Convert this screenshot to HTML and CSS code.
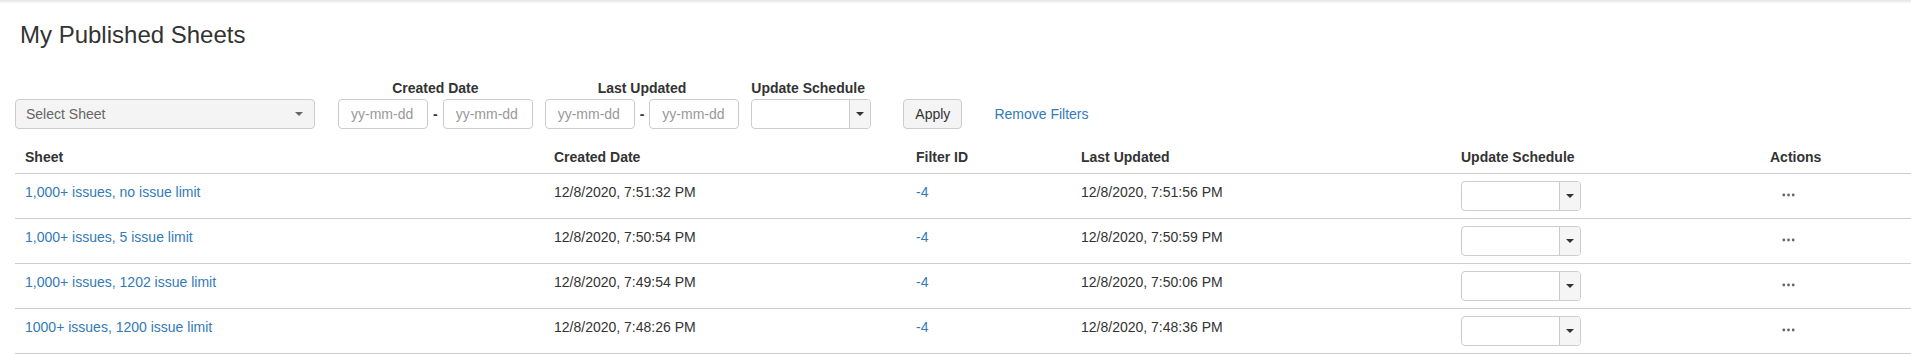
FILE: index.html
```html
<!DOCTYPE html>
<html lang="en">
<head>
    <meta charset="UTF-8">
    <meta name="viewport" content="width=device-width, initial-scale=1.0">
    <title>My Published Sheets</title>
    <link rel="stylesheet" href="styles.css">
</head>
<body>
    <div class="top-shadow"></div>

    <!-- Page content -->
    <div class="page">
        <h3 class="page-title">My Published Sheets</h3>

        <!-- Filters -->
        <div class="filters">
            <div class="filter-group">
                <div class="picker">
                    <span class="picker-text">Select Sheet</span>
                    <span class="caret caret-muted"></span>
                </div>
            </div>

            <div class="filter-group filter-range first-range">
                <label class="filter-label">Created Date</label>
                <div class="range">
                    <input class="date-input" type="text" placeholder="yy-mm-dd">
                    <span class="range-dash">-</span>
                    <input class="date-input" type="text" placeholder="yy-mm-dd">
                </div>
            </div>

            <div class="filter-group filter-range">
                <label class="filter-label">Last Updated</label>
                <div class="range">
                    <input class="date-input" type="text" placeholder="yy-mm-dd">
                    <span class="range-dash">-</span>
                    <input class="date-input" type="text" placeholder="yy-mm-dd">
                </div>
            </div>

            <div class="filter-group filter-schedule">
                <label class="filter-label">Update Schedule</label>
                <div class="combo">
                    <span class="combo-field"></span>
                    <span class="combo-btn"><span class="caret"></span></span>
                </div>
            </div>

            <button class="btn" type="button">Apply</button>
            <a class="link remove-link" href="#">Remove Filters</a>
        </div>

        <!-- Sheets table -->
        <table class="sheets">
            <colgroup>
                <col class="col-sheet">
                <col class="col-created">
                <col class="col-filter">
                <col class="col-updated">
                <col class="col-schedule">
                <col class="col-actions">
            </colgroup>
            <thead>
                <tr>
                    <th>Sheet</th>
                    <th>Created Date</th>
                    <th>Filter ID</th>
                    <th>Last Updated</th>
                    <th>Update Schedule</th>
                    <th>Actions</th>
                </tr>
            </thead>
            <tbody>
                <tr>
                    <td><a class="link" href="#">1,000+ issues, no issue limit</a></td>
                    <td>12/8/2020, 7:51:32 PM</td>
                    <td><a class="link" href="#">-4</a></td>
                    <td>12/8/2020, 7:51:56 PM</td>
                    <td><div class="combo"><span class="combo-field"></span><span class="combo-btn"><span class="caret"></span></span></div></td>
                    <td><span class="actions"><svg width="13" height="4" viewBox="0 0 13 4" aria-hidden="true"><circle cx="1.8" cy="2" r="1.4"/><circle cx="6.5" cy="2" r="1.4"/><circle cx="11.2" cy="2" r="1.4"/></svg></span></td>
                </tr>
                <tr>
                    <td><a class="link" href="#">1,000+ issues, 5 issue limit</a></td>
                    <td>12/8/2020, 7:50:54 PM</td>
                    <td><a class="link" href="#">-4</a></td>
                    <td>12/8/2020, 7:50:59 PM</td>
                    <td><div class="combo"><span class="combo-field"></span><span class="combo-btn"><span class="caret"></span></span></div></td>
                    <td><span class="actions"><svg width="13" height="4" viewBox="0 0 13 4" aria-hidden="true"><circle cx="1.8" cy="2" r="1.4"/><circle cx="6.5" cy="2" r="1.4"/><circle cx="11.2" cy="2" r="1.4"/></svg></span></td>
                </tr>
                <tr>
                    <td><a class="link" href="#">1,000+ issues, 1202 issue limit</a></td>
                    <td>12/8/2020, 7:49:54 PM</td>
                    <td><a class="link" href="#">-4</a></td>
                    <td>12/8/2020, 7:50:06 PM</td>
                    <td><div class="combo"><span class="combo-field"></span><span class="combo-btn"><span class="caret"></span></span></div></td>
                    <td><span class="actions"><svg width="13" height="4" viewBox="0 0 13 4" aria-hidden="true"><circle cx="1.8" cy="2" r="1.4"/><circle cx="6.5" cy="2" r="1.4"/><circle cx="11.2" cy="2" r="1.4"/></svg></span></td>
                </tr>
                <tr>
                    <td><a class="link" href="#">1000+ issues, 1200 issue limit</a></td>
                    <td>12/8/2020, 7:48:26 PM</td>
                    <td><a class="link" href="#">-4</a></td>
                    <td>12/8/2020, 7:48:36 PM</td>
                    <td><div class="combo"><span class="combo-field"></span><span class="combo-btn"><span class="caret"></span></span></div></td>
                    <td><span class="actions"><svg width="13" height="4" viewBox="0 0 13 4" aria-hidden="true"><circle cx="1.8" cy="2" r="1.4"/><circle cx="6.5" cy="2" r="1.4"/><circle cx="11.2" cy="2" r="1.4"/></svg></span></td>
                </tr>
            </tbody>
        </table>
    </div>
</body>
</html>
```

FILE: styles.css
```css
/* Reset and base styles */
*,
*::before,
*::after {
    margin: 0;
    padding: 0;
    box-sizing: border-box;
}

body {
    font-family: 'Liberation Sans', Arial, Helvetica, sans-serif;
    font-size: 14px;
    line-height: 20px;
    color: #333;
    background: #fff;
    overflow: hidden;
}

/* Shadow of the bar above the page */
.top-shadow {
    height: 4px;
    background: linear-gradient(to bottom, #e4e4e4 0%, #f3f3f3 50%, #fff 100%);
}

.page {
    padding-left: 15px;
}

.page-title {
    font-size: 24px;
    font-weight: 400;
    line-height: 26px;
    margin: 18px 0 0 5px;
}

/* Filters bar */
.filters {
    display: flex;
    align-items: flex-end;
    margin-top: 30px;
}

.filter-group {
    display: flex;
    flex-direction: column;
}

.filter-range {
    align-items: center;
    margin-left: 12px;
}

.first-range {
    margin-left: 23px;
}

.filter-schedule {
    margin-left: 12px;
}

.filter-label {
    font-weight: 700;
    line-height: 20px;
    margin-bottom: 1px;
}

.picker {
    width: 300px;
    height: 30px;
    display: flex;
    align-items: center;
    justify-content: space-between;
    padding: 0 11px 0 10px;
    background: #f4f4f4;
    border: 1px solid #ccc;
    border-radius: 4px;
}

.picker-text {
    color: #666;
}

.caret {
    display: inline-block;
    width: 0;
    height: 0;
    border-left: 4px solid transparent;
    border-right: 4px solid transparent;
    border-top: 4px solid #333;
}

.caret-muted {
    border-top-color: #666;
}

.range {
    display: flex;
    align-items: center;
}

.date-input {
    width: 90px;
    height: 30px;
    padding: 0 12px;
    font-family: inherit;
    font-size: 14px;
    color: #333;
    border: 1px solid #ccc;
    border-radius: 4px;
    background: #fff;
    outline: none;
}

.date-input::placeholder {
    color: #999;
}

.range-dash {
    font-weight: 700;
    margin: 0 5px;
}

/* Dropdown with a button on the side */
.combo {
    width: 120px;
    height: 30px;
    display: flex;
    border: 1px solid #ccc;
    border-radius: 4px;
    overflow: hidden;
    background: #fff;
}

.combo-field {
    flex: 1;
}

.combo-btn {
    width: 21px;
    display: flex;
    align-items: center;
    justify-content: center;
    border-left: 1px solid #ccc;
    background: #f5f5f5;
}

.btn {
    height: 30px;
    margin-left: 32px;
    padding: 0 11px;
    font-family: inherit;
    font-size: 14px;
    color: #333;
    background: #f4f4f4;
    border: 1px solid #ccc;
    border-radius: 4px;
}

.link {
    color: #337ab7;
    text-decoration: none;
}

.remove-link {
    margin-left: 32px;
    line-height: 30px;
}

/* Sheets table */
.sheets {
    width: 100%;
    margin-top: 10px;
    border-collapse: collapse;
    table-layout: fixed;
}

.col-sheet { width: 529px; }
.col-created { width: 362px; }
.col-filter { width: 165px; }
.col-updated { width: 380px; }
.col-schedule { width: 309px; }

.sheets th {
    text-align: left;
    font-weight: 700;
    line-height: 20px;
    padding: 8px 10px 6px;
    border-bottom: 1px solid #ccc;
}

.sheets td {
    vertical-align: top;
    line-height: 22px;
    padding: 7px 10px;
    border-bottom: 1px solid #ccc;
}

.actions {
    display: inline-flex;
    align-items: center;
    height: 22px;
    margin-left: 12px;
    fill: #666;
}
```
